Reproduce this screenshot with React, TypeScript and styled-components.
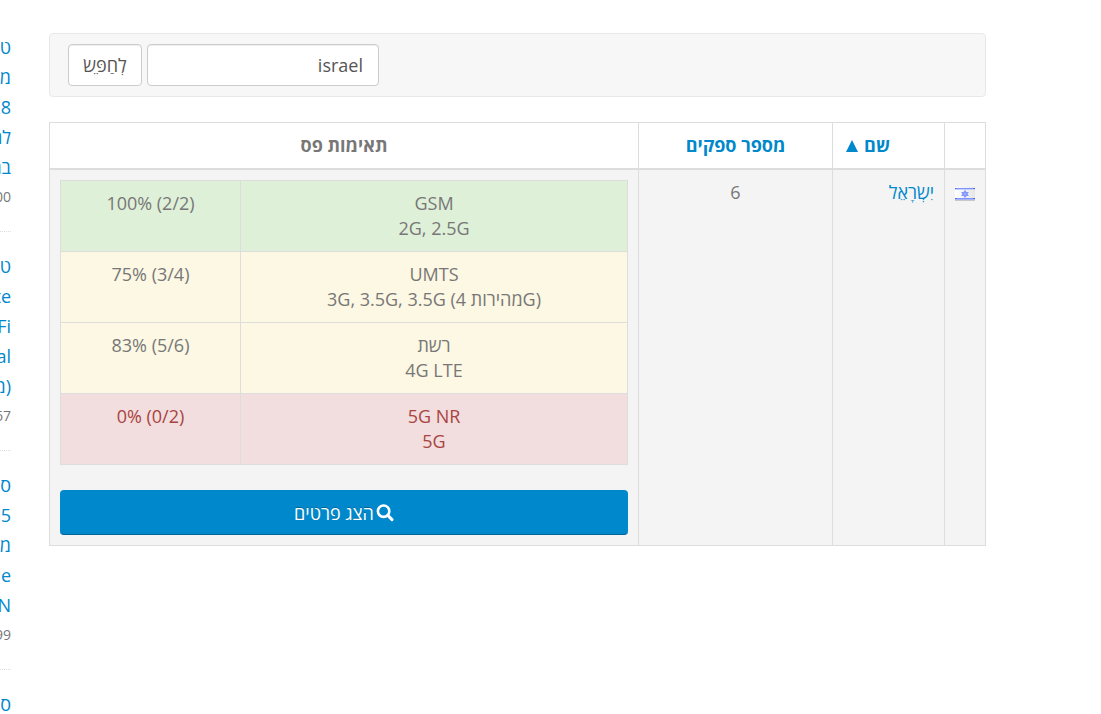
import React from "react";
import styled, { createGlobalStyle, css } from "styled-components";

const GlobalStyle = createGlobalStyle`
  *, *::before, *::after { box-sizing: border-box; }
  body {
    margin: 0;
    background: #fff;
    color: #777;
    font-family: "Open Sans", "Noto Sans", sans-serif;
    font-size: 18px;
    line-height: 25px;
    overflow: hidden;
  }
  a { color: #08c; text-decoration: none; }
`;

const Page = styled.div`
  display: flex;
  align-items: flex-start;
  gap: 38px;
  padding: 32px 115px 0 0;
`;

const Main = styled.main`
  flex: 1;
  min-width: 0;
  padding-top: 1px;
`;

const Sidebar = styled.aside`
  width: 11px;
  flex-shrink: 0;
`;

const Post = styled.article`
  padding-bottom: 20px;
  border-bottom: 1px dotted #ddd;
  white-space: nowrap;

  & + & {
    padding-top: 19px;
  }

  &:last-child {
    padding-bottom: 0;
    border-bottom: 0;
  }
`;

const PostLink = styled.a`
  display: block;
  line-height: 30px;
`;

const PostLine = styled.span`
  display: block;
`;

const PostMeta = styled.small`
  display: block;
  font-size: 14px;
  line-height: 29px;
`;

const SearchBar = styled.form`
  display: flex;
  direction: ltr;
  gap: 5px;
  padding: 10px 18px;
  margin-bottom: 25px;
  border: 1px solid #e8e8e8;
  border-radius: 4px;
  background: #f7f7f7;
`;

const control = css`
  height: 42px;
  border: 1px solid #ccc;
  border-radius: 4px;
  background: #fff;
  box-shadow: inset 0 1px 1px rgba(0, 0, 0, 0.075);
  color: #555;
  direction: rtl;
  font: inherit;
`;

const SearchInput = styled.input`
  ${control}
  width: 232px;
  padding: 0 15px;
`;

const SearchButton = styled.button`
  ${control}
  width: 74px;
  padding: 0;
`;

const Table = styled.table`
  width: 100%;
  table-layout: fixed;
  border-collapse: collapse;
  border: 1px solid #ddd;
`;

const Col = styled.col<{ $width?: number }>`
  width: ${(p) => (p.$width ? `${p.$width}px` : "auto")};
`;

const HeadCell = styled.th<{ $sorted?: boolean }>`
  padding: ${(p) => (p.$sorted ? "10px 54px 10px 12px" : "10px")};
  border: 1px solid #ddd;
  border-bottom-width: 2px;
  font-weight: 700;
  white-space: nowrap;
`;

const SortLink = styled.a`
  display: flex;
  align-items: center;
  gap: 6px;
`;

const SortArrow = styled.svg`
  width: 12px;
  height: 12px;
  fill: currentColor;
`;

const Cell = styled.td<{ $align?: string }>`
  padding: 10px;
  border: 1px solid #ddd;
  background: #f4f4f4;
  vertical-align: top;
  text-align: ${(p) => p.$align || "center"};
`;

const tones = {
  success: { background: "#dff0d8", color: "#777" },
  warning: { background: "#fcf8e3", color: "#777" },
  danger: { background: "#f2dede", color: "#a94442" },
};

type Tone = keyof typeof tones;

const BandTable = styled(Table)`
  margin-bottom: 25px;
`;

const BandCell = styled.td<{ $tone: Tone }>`
  padding: 10px;
  border: 1px solid #ddd;
  background: ${(p) => tones[p.$tone].background};
  color: ${(p) => tones[p.$tone].color};
  vertical-align: top;
  text-align: center;
  direction: ltr;
`;

const DetailsButton = styled.button`
  display: flex;
  align-items: center;
  justify-content: center;
  gap: 2px;
  width: 100%;
  height: 45px;
  padding: 2px 0 0;
  border: 0;
  border-bottom: 1px solid #069;
  border-radius: 4px;
  background: #08c;
  color: #fff;
  font: inherit;
  text-shadow: 0 -1px 0 rgba(0, 0, 0, 0.25);
`;

const SearchIcon = styled.svg`
  width: 18px;
  height: 18px;
  fill: none;
  stroke: currentColor;
`;

const Flag = styled.svg`
  display: block;
  width: 20px;
  height: 14px;
  margin-top: 7px;
`;

const posts = [
  { lines: ["ט", "מ", "28", "לה", "בת"], meta: "00" },
  { lines: ["ט", "te", "Fi", "al", "(מ"], meta: "67" },
  { lines: ["ס", "5", "מ", "de", "N"], meta: "99" },
  { lines: ["ס"] },
];

const bands: { name: string; detail: string; score: string; tone: Tone }[] = [
  { name: "GSM", detail: "2G, 2.5G", score: "100% (2/2)", tone: "success" },
  { name: "UMTS", detail: "3G, 3.5G, 3.5G (מהירות 4G)", score: "75% (3/4)", tone: "warning" },
  { name: "רשת", detail: "4G LTE", score: "83% (5/6)", tone: "warning" },
  { name: "5G NR", detail: "5G", score: "0% (0/2)", tone: "danger" },
];

function IsraelFlag() {
  return (
    <Flag viewBox="0 0 20 14" role="img" aria-label="ישראל">
      <defs>
        <linearGradient id="cloth" x1="0" x2="1">
          <stop offset="0" stopColor="#fff" />
          <stop offset="1" stopColor="#e6e6e6" />
        </linearGradient>
        <linearGradient id="stripe" x1="0" x2="1">
          <stop offset="0" stopColor="#5058d0" />
          <stop offset="0.12" stopColor="#8094ff" />
          <stop offset="0.88" stopColor="#8094ff" />
          <stop offset="1" stopColor="#4850c0" />
        </linearGradient>
      </defs>
      <rect width="20" height="14" fill="url(#cloth)" />
      <rect y="1" width="20" height="1" fill="url(#stripe)" />
      <rect y="2" width="20" height="1" fill="#c8d0ff" />
      <rect y="11" width="20" height="1" fill="url(#stripe)" />
      <rect y="12" width="20" height="1" fill="#a9b4f5" />
      <rect y="13" width="20" height="1" fill="#c8c8c8" />
      <path
        d="M10 4.2l2.6 4.2H7.4zM10 9.8L7.4 5.6h5.2z"
        fill="#b4c0ff"
        stroke="#8496fb"
        strokeWidth="1.4"
      />
    </Flag>
  );
}

export default function App() {
  return (
    <>
      <GlobalStyle />
      <Page dir="rtl">
        <Main>
          <SearchBar onSubmit={(e) => e.preventDefault()}>
            <SearchButton type="submit">לְחַפֵּשׂ</SearchButton>
            <SearchInput type="text" aria-label="לְחַפֵּשׂ" defaultValue="israel" />
          </SearchBar>
          <Table>
            <colgroup>
              <Col $width={41} />
              <Col $width={112} />
              <Col $width={194} />
              <Col />
            </colgroup>
            <thead>
              <tr>
                <HeadCell />
                <HeadCell $sorted>
                  <SortLink href="#name">
                    שם
                    <SortArrow viewBox="0 0 12 12" aria-hidden="true">
                      <path d="M6 0l6 12H0z" />
                    </SortArrow>
                  </SortLink>
                </HeadCell>
                <HeadCell>
                  <a href="#carriers">מספר ספקים</a>
                </HeadCell>
                <HeadCell>תאימות פס</HeadCell>
              </tr>
            </thead>
            <tbody>
              <tr>
                <Cell>
                  <IsraelFlag />
                </Cell>
                <Cell $align="right">
                  <a href="#israel">יִשְׂרָאֵל</a>
                </Cell>
                <Cell>6</Cell>
                <Cell>
                  <BandTable>
                    <colgroup>
                      <Col />
                      <Col $width={180} />
                    </colgroup>
                    <tbody>
                      {bands.map((b) => (
                        <tr key={b.name}>
                          <BandCell $tone={b.tone}>
                            {b.name}
                            <br />
                            {b.detail}
                          </BandCell>
                          <BandCell $tone={b.tone}>{b.score}</BandCell>
                        </tr>
                      ))}
                    </tbody>
                  </BandTable>
                  <DetailsButton type="button">
                    <SearchIcon viewBox="0 0 18 18" aria-hidden="true">
                      <circle cx="7.6" cy="7.2" r="5.7" strokeWidth="2.6" />
                      <path d="M11.8 11.4l4.2 4.2" strokeWidth="3" strokeLinecap="round" />
                    </SearchIcon>
                    הצג פרטים
                  </DetailsButton>
                </Cell>
              </tr>
            </tbody>
          </Table>
        </Main>
        <Sidebar>
          {posts.map((post, i) => (
            <Post key={i}>
              <PostLink href="#post">
                {post.lines.map((line, j) => (
                  <PostLine key={j}>{line}</PostLine>
                ))}
              </PostLink>
              {post.meta && <PostMeta>{post.meta}</PostMeta>}
            </Post>
          ))}
        </Sidebar>
      </Page>
    </>
  );
}
